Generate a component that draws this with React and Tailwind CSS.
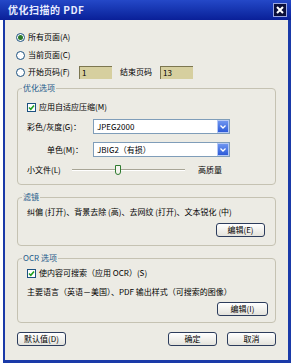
import React from "react";

const font = { fontFamily: '"Noto Sans CJK SC", "Noto Sans", sans-serif' };

const Radio = ({ checked, label }) => (
  <div className="flex items-center gap-[3px]">
    <span className="w-[9px] h-[9px] rounded-full border border-[#1c5180] bg-white flex items-center justify-center">
      {checked && <span className="w-[5px] h-[5px] rounded-full bg-[#2b7a2b]" />}
    </span>
    <span>{label}</span>
  </div>
);

const Check = ({ label }) => (
  <div className="flex items-center gap-[3px]">
    <span className="w-[9px] h-[9px] border border-[#1c5180] bg-white flex items-center justify-center">
      <svg width="7" height="7" viewBox="0 0 7 7">
        <path d="M1 3.5 L2.8 5.3 L6 1.5" stroke="#21a121" strokeWidth="1.6" fill="none" />
      </svg>
    </span>
    <span>{label}</span>
  </div>
);

const Field = ({ value }) => (
  <div className="w-[33px] h-[13px] bg-[#d6cf9f] border-t border-l border-[#7c7650] px-[2px] leading-[12px]">
    {value}
  </div>
);

const Select = ({ value }) => (
  <div className="w-[137px] h-[15px] bg-white border border-[#7f9db9] flex items-center">
    <span className="flex-1 pl-[3px] leading-[13px]">{value}</span>
    <span className="w-[12px] h-[13px] bg-gradient-to-b from-[#6f95f0] to-[#2d5ad8] border border-[#b4c8f6] flex items-center justify-center">
      <svg width="6" height="4" viewBox="0 0 6 4">
        <path d="M0.5 0.5 L3 3 L5.5 0.5" stroke="white" strokeWidth="1.3" fill="none" />
      </svg>
    </span>
  </div>
);

const Btn = ({ label, w = "w-[49px]" }) => (
  <div className={`${w} h-[14px] border border-[#2c3c5c] rounded-[3px] bg-gradient-to-b from-white to-[#e4e3dc] flex items-center justify-center`}>
    {label}
  </div>
);

const Group = ({ title, className, children }) => (
  <div className={`relative mx-[6px] border border-[#c5c2b2] rounded-[4px] ${className}`}>
    <span className="absolute -top-[6px] left-[4px] px-[1px] bg-[#ecebe4] text-[#1c5a8a]">
      {title}
    </span>
    {children}
  </div>
);

export default function App() {
  return (
    <div className="w-[294px] h-[363px] bg-white text-[8px] leading-[10px] text-black" style={font}>
      <div className="w-[291px] h-[363px] flex flex-col">
        <div className="h-[20px] bg-gradient-to-b from-[#2448c8] to-[#0a1f98] flex items-center justify-between pl-[8px] pr-[4px]">
          <span className="text-[10px] leading-[12px] font-bold text-[#e8ecff] tracking-[0.5px]">优化扫描的 PDF</span>
          <span className="w-[14px] h-[14px] bg-[#0b0f3a] border border-[#9aa6e0] flex items-center justify-center">
            <svg width="8" height="8" viewBox="0 0 8 8">
              <path d="M1 1 L7 7 M7 1 L1 7" stroke="white" strokeWidth="2" />
            </svg>
          </span>
        </div>
        <div className="flex-1 ml-[3px] border-l-[2px] border-r-[3px] border-b-[3px] border-[#1a3aa8] bg-[#ecebe4] pl-[6px] pr-[6px] flex flex-col">
          <div className="pl-[5px] pt-[12px] flex flex-col">
            <div className="h-[10px] flex items-center"><Radio checked label="所有页面(A)" /></div>
            <div className="h-[10px] mt-[8px] flex items-center"><Radio label="当前页面(C)" /></div>
            <div className="h-[14px] mt-[5px] flex items-center">
              <div className="w-[63px]"><Radio label="开始页码(F)" /></div>
              <Field value="1" />
              <span className="ml-[8px] w-[40px]">结束页码</span>
              <Field value="13" />
            </div>
          </div>

          <Group title="优化选项" className="mt-[9px] h-[97px]">
            <div className="pl-[9px] pt-[13px] flex flex-col">
              <div className="h-[10px] flex items-center"><Check label="应用自适应压缩(M)" /></div>
              <div className="h-[15px] mt-[7px] flex items-center">
                <span className="w-[66px]">彩色/灰度(G)：</span>
                <Select value="JPEG2000" />
              </div>
              <div className="h-[15px] mt-[8px] flex items-center">
                <span className="w-[66px] pl-[20px]">单色(M)：</span>
                <Select value="JBIG2（有损）" />
              </div>
              <div className="h-[12px] mt-[7px] flex items-center">
                <span className="w-[45px]">小文件(L)</span>
                <div className="relative w-[113px] h-[10px] flex items-center">
                  <div className="w-full h-[2px] bg-[#a8a596] border-b border-white" />
                  <div className="absolute left-[43px] top-0 w-[6px] h-[10px] rounded-b-[3px] border border-[#2f7a2f] bg-[#f4f4ee]" />
                </div>
                <span className="ml-[13px]">高质量</span>
              </div>
            </div>
          </Group>

          <Group title="滤镜" className="mt-[12px] h-[49px]">
            <div className="pl-[9px] pt-[9px] flex flex-col">
              <span>纠偏 (打开)、背景去除 (高)、去网纹 (打开)、文本锐化 (中)</span>
              <div className="flex justify-end pr-[10px] mt-[6px]"><Btn label="编辑(E)" /></div>
            </div>
          </Group>

          <Group title="OCR 选项" className="mt-[12px] h-[65px]">
            <div className="pl-[9px] pt-[9px] flex flex-col">
              <div className="h-[10px] flex items-center"><Check label="使内容可搜索（应用 OCR）(S)" /></div>
              <span className="mt-[9px]">主要语言（英语－美国）、PDF 输出样式（可搜索的图像）</span>
              <div className="flex justify-end pr-[7px] mt-[5px]"><Btn label="编辑(I)" w="w-[51px]" /></div>
            </div>
          </Group>

          <div className="mt-[9px] mx-[6px] flex items-center">
            <Btn label="默认值(D)" />
            <div className="flex-1" />
            <Btn label="确定" />
            <div className="w-[10px]" />
            <Btn label="取消" />
          </div>
        </div>
      </div>
    </div>
  );
}
